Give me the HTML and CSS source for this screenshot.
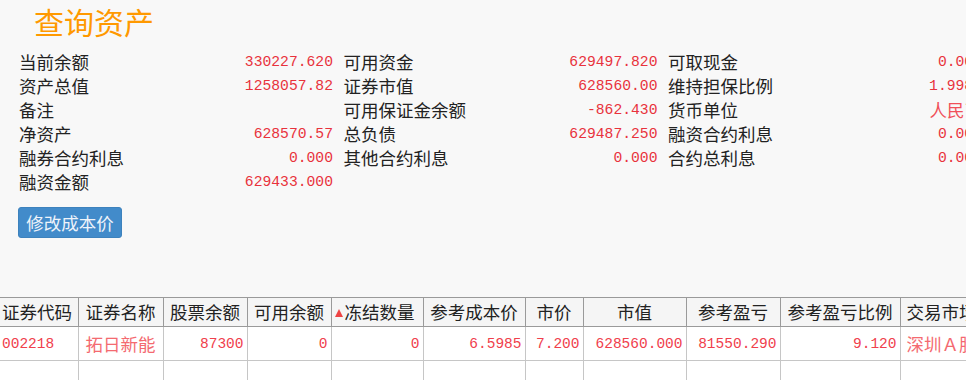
FILE: index.html
```html
<!DOCTYPE html>
<html lang="zh-CN">
<head>
  <meta charset="UTF-8" />
  <meta name="viewport" content="width=device-width, initial-scale=1.0"/>
  <title>查询资产</title>
  <link rel="stylesheet" href="styles.css">
</head>
<body>
  <div class="title">查询资产</div>

  <div class="info">
    <div class="item"><span class="label">当前余额</span><span class="num">330227.620</span></div>
    <div class="item"><span class="label">可用资金</span><span class="num">629497.820</span></div>
    <div class="item"><span class="label">可取现金</span><span class="num">0.000</span></div>

    <div class="item"><span class="label">资产总值</span><span class="num">1258057.82</span></div>
    <div class="item"><span class="label">证券市值</span><span class="num">628560.00</span></div>
    <div class="item"><span class="label">维持担保比例</span><span class="num">1.9985</span></div>

    <div class="item"><span class="label">备注</span><span class="num"></span></div>
    <div class="item"><span class="label">可用保证金余额</span><span class="num">-862.430</span></div>
    <div class="item"><span class="label">货币单位</span><span class="txt">人民币</span></div>

    <div class="item"><span class="label">净资产</span><span class="num">628570.57</span></div>
    <div class="item"><span class="label">总负债</span><span class="num">629487.250</span></div>
    <div class="item"><span class="label">融资合约利息</span><span class="num">0.000</span></div>

    <div class="item"><span class="label">融券合约利息</span><span class="num">0.000</span></div>
    <div class="item"><span class="label">其他合约利息</span><span class="num">0.000</span></div>
    <div class="item"><span class="label">合约总利息</span><span class="num">0.000</span></div>

    <div class="item"><span class="label">融资金额</span><span class="num">629433.000</span></div>
  </div>

  <div class="actions">
    <button class="btn">修改成本价</button>
  </div>

  <div class="grid-wrap">
    <table class="grid">
      <colgroup>
        <col style="width:78px"><col style="width:85px"><col style="width:84px"><col style="width:84px">
        <col style="width:92px"><col style="width:102px"><col style="width:58px"><col style="width:103px">
        <col style="width:94px"><col style="width:120px"><col style="width:110px">
      </colgroup>
      <thead>
        <tr>
          <th class="first">证券代码</th>
          <th>证券名称</th>
          <th>股票余额</th>
          <th>可用余额</th>
          <th class="sorted"><span class="tri"></span>冻结数量</th>
          <th>参考成本价</th>
          <th>市价</th>
          <th>市值</th>
          <th>参考盈亏</th>
          <th>参考盈亏比例</th>
          <th class="left">交易市场</th>
        </tr>
      </thead>
      <tbody>
        <tr>
          <td class="first num">002218</td>
          <td class="center txt">拓日新能</td>
          <td class="num">87300</td>
          <td class="num">0</td>
          <td class="num">0</td>
          <td class="num">6.5985</td>
          <td class="num">7.200</td>
          <td class="num">628560.000</td>
          <td class="num">81550.290</td>
          <td class="num">9.120</td>
          <td class="left txt">深圳Ａ股</td>
        </tr>
        <tr class="empty">
          <td class="first"></td><td></td><td></td><td></td><td></td><td></td>
          <td></td><td></td><td></td><td></td><td></td>
        </tr>
      </tbody>
    </table>
  </div>
</body>
</html>
```

FILE: styles.css
```css
* {
  box-sizing: border-box;
  margin: 0;
  padding: 0;
}

html, body {
  overflow: hidden;
}

body {
  background: #f8f8f8;
  color: #222;
  font-family: "Noto Sans CJK SC", "DejaVu Sans", sans-serif;
  font-size: 17.5px;
}

.title {
  height: 42px;
  line-height: 42px;
  padding-left: 34px;
  font-size: 30px;
  color: #ff9900;
}

/* summary block */
.info {
  display: grid;
  grid-template-columns: repeat(3, 314px);
  column-gap: 10.5px;
  margin-top: 8px;
  padding-left: 19px;
  width: 1010px;
}

.item {
  display: flex;
  justify-content: space-between;
  align-items: center;
  height: 24px;
  line-height: 24px;
}

.item .num {
  font-family: "Liberation Mono", monospace;
  font-size: 14.7px;
  color: #e8323c;
}

.item .txt {
  color: #f0505a;
}

.actions {
  margin-top: 13px;
  padding-left: 18px;
}

.btn {
  width: 104px;
  height: 31px;
  background: #428bca;
  border: 1px solid #3d82bd;
  border-radius: 3px;
  color: #eef3fa;
  font-family: inherit;
  font-size: 17.5px;
  line-height: 28px;
}

/* positions table */
.grid-wrap {
  margin-top: 59px;
  width: 1020px;
}

.grid {
  border-collapse: collapse;
  table-layout: fixed;
  width: 1010px;
  background: #fff;
}

.grid th {
  height: 29px;
  padding: 0 2px;
  background: #f5f5f5;
  border: 1px solid #9a9a9a;
  font-weight: normal;
  text-align: center;
  white-space: nowrap;
  overflow: hidden;
  line-height: 26px;
}

.grid td {
  height: 34px;
  padding: 0 3px;
  border: 1px solid #c6c6c6;
  white-space: nowrap;
  overflow: hidden;
  text-align: right;
}

.grid .first {
  border-left: none;
  text-align: left;
  padding-left: 2px;
}

.grid .left {
  text-align: left;
  padding-left: 6px;
}

.grid .center {
  text-align: center;
}

.grid th.sorted {
  padding-left: 3px;
  text-align: left;
}

.tri {
  display: inline-block;
  width: 0;
  height: 0;
  border-left: 4px solid transparent;
  border-right: 4px solid transparent;
  border-bottom: 8px solid #ee4444;
  margin-right: 2px;
  vertical-align: 2px;
}

.grid td.num {
  font-family: "Liberation Mono", monospace;
  font-size: 14.5px;
  color: #f0404c;
}

.grid td.txt {
  color: #f46a70;
}

.grid tr.empty td {
  height: 30px;
}
```
